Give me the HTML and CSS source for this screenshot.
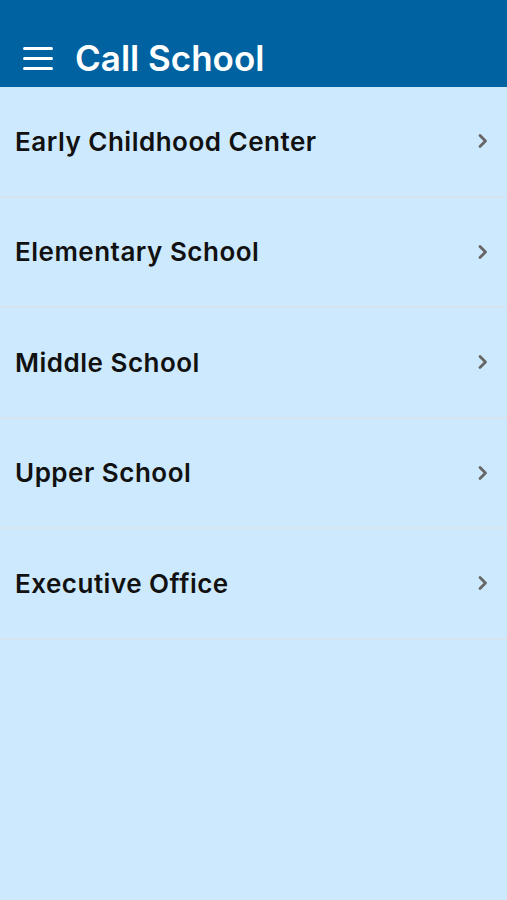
FILE: index.html
```html
<!DOCTYPE html>
<html lang="en">

<head>
    <meta charset="UTF-8">
    <meta name="viewport" content="width=device-width, initial-scale=1.0">
    <title>Call School</title>

    <link rel="stylesheet" href="styles.css">

</head>

<body>
    <header class="app-bar">
        <button class="menu-btn" aria-label="Menu">
            <svg width="30" height="24" viewBox="0 0 30 24">
                <rect x="0" y="1" width="30" height="3" rx="1.5" fill="#fff" />
                <rect x="0" y="11" width="30" height="3" rx="1.5" fill="#fff" />
                <rect x="0" y="21" width="30" height="3" rx="1.5" fill="#fff" />
            </svg>
        </button>
        <h1>Call School</h1>
    </header>

    <main>
        <ul class="school-list">
            <li class="school-item">
                <span>Early Childhood Center</span>
                <svg class="chevron" width="12" height="16" viewBox="0 0 12 16"><path d="M3 2.5 L8.5 8 L3 13.5" /></svg>
            </li>
            <li class="school-item">
                <span>Elementary School</span>
                <svg class="chevron" width="12" height="16" viewBox="0 0 12 16"><path d="M3 2.5 L8.5 8 L3 13.5" /></svg>
            </li>
            <li class="school-item">
                <span>Middle School</span>
                <svg class="chevron" width="12" height="16" viewBox="0 0 12 16"><path d="M3 2.5 L8.5 8 L3 13.5" /></svg>
            </li>
            <li class="school-item">
                <span>Upper School</span>
                <svg class="chevron" width="12" height="16" viewBox="0 0 12 16"><path d="M3 2.5 L8.5 8 L3 13.5" /></svg>
            </li>
            <li class="school-item">
                <span>Executive Office</span>
                <svg class="chevron" width="12" height="16" viewBox="0 0 12 16"><path d="M3 2.5 L8.5 8 L3 13.5" /></svg>
            </li>
        </ul>
    </main>

</body>

</html>
```

FILE: styles.css
```css
:root {
    background-color: #cce9fd;
    font-family: Inter, "Noto Sans", sans-serif;
}

body {
    margin: 0;
    min-height: 900px;
    background-color: #cce9fd;
}

.app-bar {
    display: flex;
    align-items: center;
    height: 87px;
    padding: 28px 0 0 23px;
    box-sizing: border-box;
    background-color: #0062a1;
    color: #fff;
}

.menu-btn {
    display: flex;
    padding: 0;
    margin: 0 22px 0 0;
    border: none;
    background: none;
}

.app-bar h1 {
    margin: 0;
    font-size: 35px;
    font-weight: 600;
    letter-spacing: 0;
}

.school-list {
    list-style: none;
    margin: 0;
    padding: 0;
}

.school-item {
    display: flex;
    align-items: center;
    justify-content: space-between;
    height: 108.5px;
    padding: 0 18px 0 15px;
    border-bottom: 2px solid #d6e4ee;
    font-size: 26px;
    font-weight: 600;
    color: #111;
    letter-spacing: 0.5px;
}

.chevron path {
    fill: none;
    stroke: #666;
    stroke-width: 2.8;
    stroke-linecap: round;
    stroke-linejoin: round;
}
```
